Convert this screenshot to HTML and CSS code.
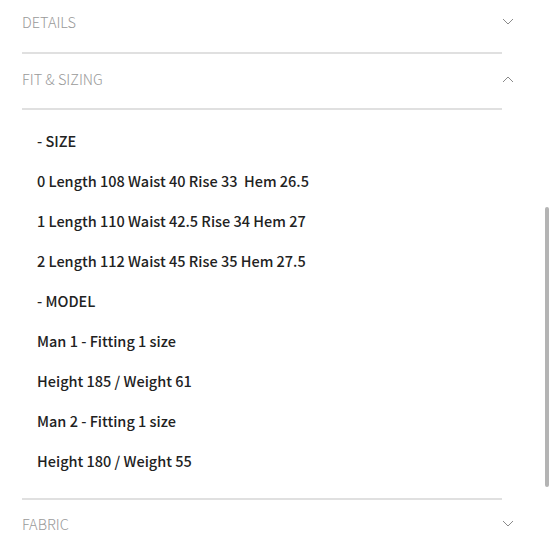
FILE: index.html
```
<!DOCTYPE html>
<html>
<head>
<meta charset="utf-8">
<link rel="stylesheet" href="styles.css">
</head>
<body>
<div class="panel">
  <div class="acc-head first">
    <span class="acc-title">DETAILS</span>
    <svg class="chev" width="12" height="7" viewBox="0 0 12 7"><path d="M1 1 L6 6 L11 1" fill="none" stroke="#8a8a8a" stroke-width="1"/></svg>
  </div>
  <div class="acc-head">
    <span class="acc-title">FIT &amp; SIZING</span>
    <svg class="chev up" width="12" height="7" viewBox="0 0 12 7"><path d="M1 6 L6 1 L11 6" fill="none" stroke="#8a8a8a" stroke-width="1"/></svg>
  </div>
  <div class="acc-body">
    <p>- SIZE</p>
    <p>0 Length 108 Waist 40 Rise 33&nbsp; Hem 26.5</p>
    <p>1 Length 110 Waist 42.5 Rise 34 Hem 27</p>
    <p>2 Length 112 Waist 45 Rise 35 Hem 27.5</p>
    <p>- MODEL</p>
    <p>Man 1 - Fitting 1 size</p>
    <p>Height 185 / Weight 61</p>
    <p>Man 2 - Fitting 1 size</p>
    <p>Height 180 / Weight 55</p>
  </div>
  <div class="acc-head last">
    <span class="acc-title">FABRIC</span>
    <svg class="chev" width="12" height="7" viewBox="0 0 12 7"><path d="M1 1 L6 6 L11 1" fill="none" stroke="#8a8a8a" stroke-width="1"/></svg>
  </div>
</div>
<div class="scrollbar"></div>
</body>
</html>
```
FILE: styles.css
```
html, body {
  margin: 0;
  padding: 0;
  background: #fff;
}
body {
  width: 554px;
  height: 554px;
  overflow: hidden;
  position: relative;
  font-family: "Noto Sans CJK KR", "Noto Sans", sans-serif;
}
.panel {
  padding: 0 22px 0 22px;
  width: 480px;
}
.acc-head {
  display: flex;
  align-items: center;
  justify-content: space-between;
  height: 56px;
  border-bottom: 2px solid #e0e0e0;
  box-sizing: border-box;
  padding-bottom: 6px;
}
.acc-head.first {
  height: 54px;
  padding-bottom: 10px;
}
.acc-head.last {
  border-bottom: none;
  height: 48px;
  padding-bottom: 2px;
}
.acc-title {
  font-size: 14.5px;
  font-weight: 300;
  color: #9a9a9a;
}
.chev {
  display: block;
  margin-right: -12px;
}
.chev.up {
  margin-top: 2px;
}
.acc-body {
  padding: 11px 0 17px 15px;
  border-bottom: 2px solid #e0e0e0;
}
.acc-body p {
  margin: 0;
  line-height: 40px;
  height: 40px;
  font-size: 14.5px;
  font-weight: 500;
  color: #222;
}
.scrollbar {
  position: absolute;
  left: 545px;
  top: 207px;
  width: 4px;
  height: 280px;
  border-radius: 2px;
  background: #b4b4b4;
}
```
